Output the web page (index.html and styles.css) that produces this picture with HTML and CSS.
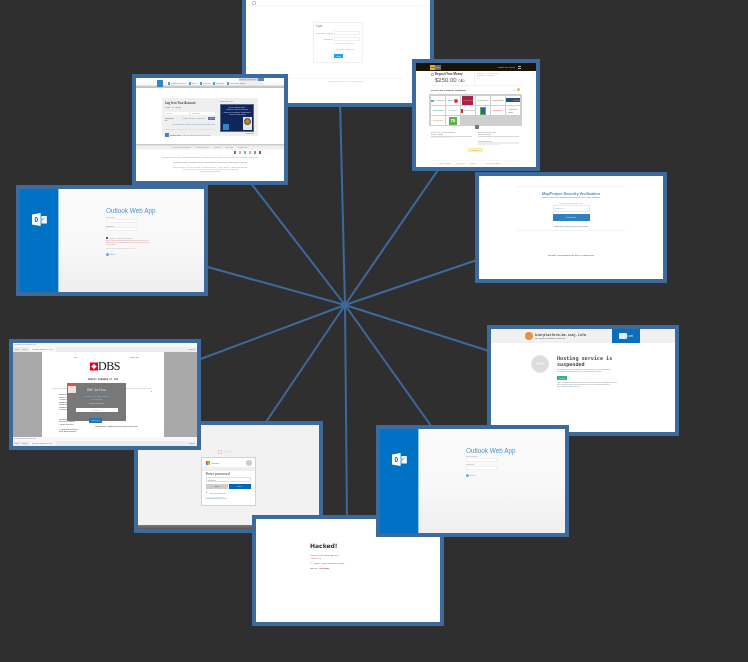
FILE: index.html
```html
<!DOCTYPE html>
<html lang="en">
<head>
<meta charset="utf-8">
<title>Phishing site clusters</title>
<link rel="stylesheet" href="styles.css">
</head>
<body>
<main class="canvas">
  <svg class="links" width="748" height="662" viewBox="0 0 748 662">
    <g class="link-lines">
      <line x1="345" y1="305" x2="340" y2="100"/>
      <line x1="345" y1="305" x2="250" y2="182"/>
      <line x1="345" y1="305" x2="440" y2="167"/>
      <line x1="345" y1="305" x2="480" y2="259"/>
      <line x1="345" y1="305" x2="204" y2="266"/>
      <line x1="345" y1="305" x2="198" y2="360"/>
      <line x1="345" y1="305" x2="492" y2="352"/>
      <line x1="345" y1="305" x2="264" y2="425"/>
      <line x1="345" y1="305" x2="434" y2="430"/>
      <line x1="345" y1="305" x2="347" y2="520"/>
    </g>
  </svg>

  <!-- top login -->
  <section class="shot s-login">
    <div class="page">
      <div class="lg-head"><span class="lg-icon"></span></div>
      <div class="lg-box">
        <div class="lg-title">Login</div>
        <div class="lg-row lg-first"><span class="lg-label">Username / Email</span><span class="lg-input"></span></div>
        <div class="lg-row"><span class="lg-label">Password</span><span class="lg-input"></span></div>
        <div class="lg-forgot">Forgot your password?</div>
        <div class="lg-keep">Keep me logged in</div>
        <div class="lg-btn">Login</div>
      </div>
      <div class="lg-foot">Copyright 2016 Webmail Server. All rights reserved</div>
    </div>
  </section>

  <!-- american express -->
  <section class="shot s-amex">
    <div class="page">
      <div class="ax-head">
        <span class="ax-logo"></span>
        <nav class="ax-nav">
          <span class="ax-nav-item"><i></i>Cards &amp; Services</span>
          <span class="ax-nav-item"><i></i>Travel</span>
          <span class="ax-nav-item"><i></i>Rewards</span>
          <span class="ax-nav-item"><i></i>Business</span>
          <span class="ax-nav-item"><i></i>Merchants</span>
        </nav>
        <div class="ax-search">
          <div class="ax-search-top"><span>Welcome, Log In Here</span><b></b></div>
          <div class="ax-search-box">Search</div>
        </div>
      </div>
      <div class="ax-card">
        <div class="ax-form">
          <div class="ax-title">Log In to Your Account</div>
          <div class="ax-select">Cards - My Account</div>
          <div class="ax-inputs"><span>User ID</span><span>Password</span></div>
          <div class="ax-actions"><span class="ax-remember">Remember<br>Me</span><span class="ax-forgot">Forgot User ID or Password?</span><b class="ax-login">Log In</b></div>
          <div class="ax-assist">Not Registered? Register for Online Services / Confirm Card</div>
          <div class="ax-reg"><i></i><b>Pay Bills Online</b> Learn more about our digital services here</div>
        </div>
        <div class="ax-promo">
          <div class="ax-promo-cap">Need Some Help?</div>
          <div class="ax-promo-img">
            <div class="ax-promo-text">Our Members Enjoy<br>Customer Service Ranked<br>Highest in Customer Satisfaction<br>Among Credit Cards</div>
            <div class="ax-promo-row"><span class="ax-promo-logo"></span><span class="ax-award"><i></i></span></div>
          </div>
          <div class="ax-promo-more">Learn more</div>
        </div>
      </div>
      <div class="ax-band">
        <span>Terms and Conditions</span><span>Security Center</span><span>Careers</span><span>Site Map</span><span>Contact Us</span>
      </div>
      <div class="ax-social"><i class="c1"></i><i class="c2"></i><i class="c3"></i><i class="c4"></i><i class="c5"></i><i class="c6"></i></div>
      <div class="ax-foot">
        <p class="ax-f1">American Express Cards | Small Business Cards | Gift Cards | Travel Cheques | Online Services | Merchant Account Travel</p>
        <p class="ax-f0">Personal Savings | Rewards Program | Special Offers | Credit Score | Send Money | Support</p>
        <p class="ax-f2">Shop Online | Travel Deals | Get Rewards | Apply Today | Small Business</p>
        <p class="ax-f3">All users of our online services are subject to our Privacy Statement and agree to the Terms of Use</p>
        <p class="ax-f3">&copy; 2015 American Express Company</p>
      </div>
    </div>
  </section>

  <!-- deposit -->
  <section class="shot s-deposit">
    <div class="page">
      <div class="dp-head">
        <span class="dp-logo"><b>GOLD</b><em>money</em></span>
        <span class="dp-nav">Contact&nbsp; Help&nbsp; Log Out</span>
        <span class="dp-menu"></span>
      </div>
      <div class="dp-top">
        <div class="dp-sum">
          <div class="dp-h"><i></i>Deposit Your Money</div>
          <div class="dp-amt">$250.00 <small>CAD</small></div>
        </div>
        <div class="dp-meta"><span>Method:<br>Online Bill</span><span>Account: 2381<br>Personal</span></div>
      </div>
      <div class="dp-sel"><span>Select Your Financial Institution</span><em>Help<i></i></em></div>
      <div class="dp-panel">
        <span class="dp-bank b-blue"><i></i>Financial</span>
        <span class="dp-bank b-bmo">BMO<i></i></span>
        <span class="dp-bank b-red">ATB Bank</span>
        <span class="dp-bank b-green">Desjardins</span>
        <span class="dp-bank b-rbc">RBC Bank</span>
        <span class="dp-bank b-scotia">Scotia</span>
        <span class="dp-bank b-coast">Coast Capital</span>
        <span class="dp-bank b-sky">Meridian</span>
        <span class="dp-bank b-cibc"><i></i>CIBC Bank</span>
        <span class="dp-bank b-rb"><i></i></span>
        <span class="dp-bank b-tang">Tangerine</span>
        <span class="dp-bank b-laur">Laurentian<br>Bank</span>
        <span class="dp-bank b-orange">Tangerine</span>
        <span class="dp-bank b-td"><i>TD</i></span>
      </div>
      <span class="dp-chip"></span>
      <div class="dp-form">
        <div class="dp-col">
          <label>Select Your Account Institution</label>
          <div class="dp-drop">Select Account</div>
          <small>Select an account to continue</small>
        </div>
        <div class="dp-col">
          <label>Select Recipient Name</label>
          <div class="dp-drop">Select Recipient</div>
          <label class="dp-l2">Recipient's Email</label>
          <div class="dp-bar"></div>
          <small>Email where to send your deposit</small>
        </div>
      </div>
      <div class="dp-btn">Deposit</div>
      <div class="dp-foot"><span>Inbox Bank</span><span>Find Us</span><span>Bank</span><span>Welcome Bank</span></div>
    </div>
  </section>

  <!-- security -->
  <section class="shot s-security">
    <div class="page">
      <div class="sc-col">
        <h2 class="sc-title">MapProject Security Verification</h2>
        <p class="sc-sub">Enter your email password to access your email settings</p>
        <p class="sc-mail">info@mapproject.org</p>
        <div class="sc-input">Password</div>
        <div class="sc-btn">Continue to</div>
        <p class="sc-link">MapProject Web Server Client Policy</p>
      </div>
      <p class="sc-copy">Copyright &copy; 2016 MapProject Web Server. All rights reserved</p>
    </div>
  </section>

  <!-- outlook with error -->
  <section class="shot s-owa1">
    <div class="owa">
      <aside class="owa-side">
        <svg class="owa-logo" viewBox="0 0 15 13"><path class="w" d="M0 1.600 8.600 0v13L0 11.400z"/><path class="w" d="M9.400 3h5.400v7.500H9.400z"/><path class="b" d="M4.300 3.900c-1 0-1.600 1-1.600 2.600s.6 2.600 1.600 2.600 1.600-1 1.600-2.600-.6-2.600-1.600-2.600zm0 1c.4 0 .6.6.6 1.600s-.2 1.600-.6 1.600-.6-.6-.6-1.600.2-1.600.6-1.600zM10 7.500l2-1.800 2-1.700-4 2.500z"/></svg>
      </aside>
      <div class="owa-main">
        <div class="owa-title">Outlook Web App</div>
        <label>User name:</label><span class="owa-input"></span>
        <label>Password:</label><span class="owa-input"></span>
        <div class="owa-check"><i></i>Security ( show explanation )</div>
        <div class="owa-err">This is a public or shared computer. Select this option if you use Outlook Web App on a public computer. Be sure to sign out when you've finished.</div>
        <div class="owa-light">Use the light version of Outlook Web App</div>
        <div class="owa-sign"><i></i>sign in</div>
      </div>
    </div>
  </section>

  <!-- pdf viewer -->
  <section class="shot s-dbs">
    <div class="pdf">
      <div class="pdf-menu">File Edit View Window Help</div>
      <div class="pdf-tools"><span>Home</span><span>Tools</span><span class="pdf-tab">SKRIPT PERKARA PT...</span><em>Sign In</em></div>
      <div class="pdf-body">
        <div class="pdf-doc">
          <div class="pdf-date"><span>TGL</span><span>Nomor Dok</span></div>
          <div class="pdf-brand"><svg class="pdf-mark" viewBox="0 0 8 8"><path d="M0 0h8v8H0z"/><path class="x" d="M4 1.100 5.200 2.800 6.900 4 5.200 5.200 4 6.900 2.800 5.200 1.100 4 2.800 2.800z"/></svg><span>DBS</span></div>
          <div class="pdf-h">SKRIPT PERKARA PT JDI</div>
          <div class="pdf-rule"><span>1</span></div>
          <div class="pdf-text">
            <p>Nomor Dokumen Perkara</p><p>Nama Perusahaan</p><p>Alamat Kantor</p><p>Tanggal Pengiriman</p><p>Nomor Rekening</p><p>Jumlah Nominal</p><p>Perihal Surat</p><p class="pdf-gap">Nasabah: 1 Kode Bank</p><p>Dokumen Lengkap</p><p>Alamat Penerima</p><p class="pdf-sum">Perkara Dua: catatan penting untuk surat resmi</p><p>(1) Nasabah's Perkara</p><p>Kode Bank Nasional</p>
          </div>
        </div>
      </div>
      <div class="pdf-menu">File Edit View Window Help</div>
      <div class="pdf-tools pdf-tools-end"><span>Home</span><span>Tools</span><span class="pdf-tab">SKRIPT PERKARA PT...</span><em>Sign In</em></div>
    </div>
    <div class="pdf-modal">
      <span class="pdf-file"></span>
      <div class="pdf-modal-title">PDF Online</div>
      <div class="pdf-modal-blue">Confirm your email address<br>to download</div>
      <div class="pdf-modal-note">Please Complete It</div>
      <div class="pdf-modal-input">Password</div>
    </div>
    <div class="pdf-modal-btn">Download</div>
  </section>

  <!-- suspended -->
  <section class="shot s-susp">
    <div class="page">
      <div class="sp-head">
        <span class="sp-face"></span>
        <div class="sp-dom"><b>kiorplatform.bo.ssoj.info</b><small>this website is hosted by SSJ.com</small></div>
        <div class="sp-brand"><i></i>.com</div>
      </div>
      <div class="sp-body">
        <div class="sp-stop"><span>STOP</span></div>
        <div class="sp-text">
          <h2>Hosting service is suspended</h2>
          <p>The website owner and the hosting provider has agreed. The ad-related platform.<br>Your hosting account provider believes you may contact the admin.</p>
          <span class="sp-btn">contact</span>
          <p>This is a phishing or abusive website that has violated hosting policy conditions of this. Our<br>service activities <u>support panel</u> and hosts of this type are required immediately to<br>have a suspended to be reviewed.</p>
        </div>
      </div>
    </div>
  </section>

  <!-- microsoft -->
  <section class="shot s-ms">
    <div class="ms">
      <div class="ms-office"><i></i>Office</div>
      <div class="ms-card">
        <div class="ms-top">
          <svg class="ms-flag" viewBox="0 0 4 4"><path fill="#f25022" d="M0 0h1.900v1.900H0z"/><path fill="#7fba00" d="M2.100 0H4v1.900H2.100z"/><path fill="#00a4ef" d="M0 2.100h1.900V4H0z"/><path fill="#ffb900" d="M2.100 2.100H4V4H2.100z"/></svg>
          <span class="ms-word">Microsoft</span>
          <span class="ms-user"></span>
        </div>
        <div class="ms-strip"></div>
        <div class="ms-form">
          <div class="ms-h">Enter password</div>
          <div class="ms-input">Password</div>
          <div class="ms-btns"><span class="ms-back">Back</span><span class="ms-next">Sign in</span></div>
          <div class="ms-keep"><i></i>Keep me signed in</div>
          <div class="ms-forgot">Forgot my password</div>
        </div>
      </div>
      <div class="ms-bottom"></div>
    </div>
  </section>

  <!-- hacked -->
  <section class="shot s-hack">
    <div class="page hk">
      <h2>Hacked!</h2>
      <p class="hk-a">Long Live the Caliphate Gov</p>
      <p class="hk-red">Hacked Us</p>
      <p class="hk-b">&#9786; Hacker : TNT Nadeula Helmed</p>
      <p class="hk-c">Our Inf.. <b>&nbsp;01711111</b></p>
      <p class="hk-d">...</p>
    </div>
  </section>

  <!-- outlook plain -->
  <section class="shot s-owa2">
    <div class="owa">
      <aside class="owa-side">
        <svg class="owa-logo" viewBox="0 0 15 13"><path class="w" d="M0 1.600 8.600 0v13L0 11.400z"/><path class="w" d="M9.400 3h5.400v7.500H9.400z"/><path class="b" d="M4.300 3.900c-1 0-1.600 1-1.600 2.600s.6 2.600 1.600 2.600 1.600-1 1.600-2.600-.6-2.600-1.600-2.600zm0 1c.4 0 .6.6.6 1.600s-.2 1.600-.6 1.600-.6-.6-.6-1.600.2-1.600.6-1.600zM10 7.500l2-1.800 2-1.700-4 2.500z"/></svg>
      </aside>
      <div class="owa-main owa-main2">
        <div class="owa-title">Outlook Web App</div>
        <label>Email address:</label><span class="owa-input"></span>
        <label>Password:</label><span class="owa-input"></span>
        <div class="owa-sign"><i></i>sign in</div>
      </div>
    </div>
  </section>
</main>
</body>
</html>
```
FILE: styles.css
```css
* { box-sizing: border-box; margin: 0; padding: 0; }
html, body { width: 748px; height: 662px; overflow: hidden; background: #2f2f2f; }
body { font-family: "Liberation Sans", Arial, sans-serif; color: #333; }
p, h2 { font-weight: normal; }
i, em { font-style: normal; }

.canvas { position: relative; width: 748px; height: 662px; overflow: hidden; }
.links { position: absolute; left: 0; top: 0; }
.link-lines line { stroke: #3d6a9c; stroke-width: 2; }

.shot { position: absolute; width: 192px; height: 111px; border: 4px solid #3d6a9c; background: #fff; overflow: hidden; }
.shot > * { filter: blur(.4px); }
.page { width: 100%; height: 100%; background: #fff; display: flex; flex-direction: column; overflow: hidden; }

.s-login { left: 242px; top: -4px; z-index: 1; }
.s-amex { left: 132px; top: 74px; width: 156px; z-index: 3; }
.s-deposit { left: 412px; top: 59px; width: 128px; height: 112px; z-index: 3; }
.s-security { left: 475px; top: 172px; z-index: 2; }
.s-owa1 { left: 16px; top: 185px; z-index: 2; }
.s-dbs { left: 9px; top: 339px; z-index: 4; }
.s-susp { left: 487px; top: 325px; z-index: 2; }
.s-ms { left: 134px; top: 421px; width: 189px; height: 112px; z-index: 3; }
.s-hack { left: 252px; top: 515px; z-index: 5; }
.s-owa2 { left: 376px; top: 425px; width: 193px; height: 112px; z-index: 6; }

/* login */
.lg-head { height: 6px; padding: 1px 0 0 6px; border-bottom: 1px solid #f6f6f6; flex: none; }
.lg-icon { display: block; width: 4px; height: 4px; border: 1px solid #b9c6cf; border-radius: 1px; }
.lg-box { width: 50px; height: 41px; margin: 16px 0 0 67px; border: 1px solid #f0f0f0; padding: 2px; color: #888; flex: none; }
.lg-title { font-size: 2.600px; line-height: 3px; color: #777; }
.lg-row { display: flex; align-items: center; justify-content: flex-end; gap: 1px; margin-top: 2px; }
.lg-first { margin-top: 3px; }
.lg-label { font-size: 2.200px; color: #999; white-space: nowrap; }
.lg-input { width: 26px; height: 4px; border: 1px solid #efefef; flex: none; }
.lg-forgot { font-size: 2px; color: #9cc; margin: 1px 0 0 18px; white-space: nowrap; line-height: 2px; }
.lg-keep { font-size: 2.200px; color: #999; margin: 4px 0 0 20px; line-height: 3px; }
.lg-btn { width: 9px; height: 4px; margin: 3px 0 0 18px; background: #18a8f0; color: #dff; font-size: 2px; line-height: 4px; text-align: center; }
.lg-foot { margin: 15px 0 0 41px; padding-top: 2px; border-top: 1px solid #f6f6f6; font-size: 1.600px; line-height: 2px; color: #bbb; text-align: center; white-space: nowrap; width: 118px; }

/* amex */
.ax-head { height: 10px; flex: none; padding-left: 21px; display: flex; align-items: flex-start; background: linear-gradient(#fff 0, #f8f8f8 65%, #bdbdbd 90%, #c9c9c9 100%); }
.ax-logo { width: 6px; height: 7px; margin-top: 2px; background: #2f86c8; flex: none; }
.ax-nav { display: flex; gap: 3px; margin: 3.500px 0 0 5px; font-size: 1.900px; white-space: nowrap; }
.ax-nav-item { display: flex; align-items: center; gap: 1px; color: #5a7f9f; }
.ax-nav-item i { width: 2px; height: 3px; background: #5e9ac4; }
.ax-search { width: 29px; margin-left: auto; margin-right: 20px; font-size: 1.800px; color: #777; white-space: nowrap; }
.ax-search-top { display: flex; height: 2.500px; background: #d6d6e0; overflow: hidden; line-height: 2.500px; justify-content: space-between; color: #878; }
.ax-search-top b { width: 6px; background: #5e86b8; }
.ax-search-box { height: 4px; background: #f0f0f0; color: #555; line-height: 4px; padding-left: 1px; }
.ax-card { width: 96px; height: 38px; margin: 10px 0 0 26px; background: #efefef; display: flex; padding: 3px 3px 0 3px; gap: 5px; flex: none; }
.ax-form { width: 50px; flex: none; font-size: 1.800px; color: #888; white-space: nowrap; }
.ax-title { font-size: 2.800px; line-height: 4px; font-weight: bold; color: #4a4a4a; }
.ax-select { line-height: 3px; margin-top: 1px; color: #666; }
.ax-inputs { display: flex; gap: 2px; margin-top: 3px; }
.ax-inputs span { flex: 1; background: #fff; height: 3px; line-height: 3px; padding-left: 1px; color: #999; }
.ax-actions { display: flex; justify-content: space-between; margin-top: 2px; line-height: 2px; align-items: flex-start; }
.ax-remember { color: #555; }
.ax-forgot { color: #7a95ae; margin-left: 6px; }
.ax-login { width: 7px; height: 3px; background: #5570aa; color: #dde; font-weight: normal; line-height: 3px; text-align: center; }
.ax-assist { color: #6f93b8; text-align: right; margin-top: 2px; line-height: 3px; font-size: 1.600px; overflow: hidden; }
.ax-reg { margin-top: 3px; padding-top: 3px; border-top: 1px solid #e2e2e2; display: flex; align-items: center; gap: 1px; font-size: 1.500px; color: #888; overflow: hidden; }
.ax-reg i { width: 4px; height: 4px; background: #4d84b5; flex: none; }
.ax-reg b { color: #4b6a99; }
.ax-promo { width: 34px; flex: none; font-size: 1.600px; color: #777; white-space: nowrap; }
.ax-promo-cap { height: 3px; line-height: 2px; }
.ax-promo-img { height: 28px; background: #10255c; border: 1px solid #5a6a8a; padding: 1px 1px 0; color: #c5d2e8; display: flex; flex-direction: column; }
.ax-promo-text { text-align: center; line-height: 2.300px; font-size: 1.900px; }
.ax-promo-row { display: flex; justify-content: space-between; align-items: flex-end; margin-top: auto; padding: 0 0 1px 1px; }
.ax-promo-logo { width: 6px; height: 6px; background: #2f86c8; }
.ax-award { width: 9px; height: 13px; background: #e6e6e6; display: flex; justify-content: center; padding-top: 1px; }
.ax-award i { width: 7px; height: 7px; border-radius: 50%; background: #b3893e; border: 1px solid #4b3a17; }
.ax-promo-more { text-align: right; line-height: 3px; color: #6a6a6a; }
.ax-band { height: 6px; margin-top: 8px; flex: none; display: flex; justify-content: center; gap: 5px; align-items: center; font-size: 1.900px; color: #6ea5cc; white-space: nowrap; background: linear-gradient(#bdbdbd, #e9e9e9 30%, #f6f6f6); }
.ax-social { display: flex; justify-content: flex-end; gap: 2.500px; height: 3px; margin-top: 1px; padding-right: 23px; flex: none; }
.ax-social i { width: 2.500px; height: 2.500px; }
.c1 { background: #5c72a8; } .c2 { background: #e8a7a0; } .c3 { background: #60b8e8; } .c4 { background: #dba4a0; } .c5 { background: #5fa0cf; } .c6 { background: #c84040; }
.ax-foot { text-align: center; padding: 1px 24px 0 24px; color: #777; }
.ax-foot p { line-height: 2.600px; }
.ax-f1 { color: #8aa3bb; font-size: 1.800px; margin-top: 1px; }
.ax-f0 { color: #888; font-size: 1.800px; margin-top: 2px; }
.ax-f2 { color: #7fb1d8; font-size: 2.300px; margin-top: 3px; }
.ax-f3 { color: #999; font-size: 1.300px; line-height: 2.400px !important; }

/* deposit */
.dp-head { height: 8px; background: #1a1303; display: flex; align-items: center; padding-left: 14px; flex: none; }
.dp-logo { display: flex; height: 5px; font-size: 1.800px; line-height: 5px; }
.dp-logo b { background: #e8ad1a; width: 5px; color: #2a1a00; overflow: hidden; }
.dp-logo em { background: #6b6b6b; width: 6px; color: #ddd; overflow: hidden; }
.dp-nav { margin-left: auto; margin-right: 3px; color: #d2d2d2; font-size: 1.700px; white-space: nowrap; }
.dp-menu { width: 3px; height: 3px; border-top: 1px solid #bbb; border-bottom: 1px solid #bbb; margin-right: 15px; }
.dp-top { display: flex; height: 15px; margin: 0 14px 0 15px; border-bottom: 1px solid #f2f2f2; flex: none; }
.dp-sum { width: 44px; border-right: 1px solid #f0f0f0; flex: none; padding-top: 1px; }
.dp-h { display: flex; align-items: center; gap: 1px; font-size: 2.900px; font-weight: bold; color: #333; white-space: nowrap; line-height: 4px; }
.dp-h i { width: 3px; height: 3px; border: 1px solid #bbb; }
.dp-amt { font-size: 6px; line-height: 7px; margin: 1px 0 0 4px; color: #555; white-space: nowrap; }
.dp-amt small { font-size: 3px; }
.dp-meta { display: flex; gap: 3px; margin: 1px 0 0 2px; font-size: 1.700px; color: #aaa; line-height: 2px; white-space: nowrap; }
.dp-sel { margin: 1px 16px 0 15px; height: 5px; display: flex; align-items: center; justify-content: space-between; font-size: 2.300px; font-weight: bold; color: #3a3a3a; white-space: nowrap; flex: none; }
.dp-sel em { display: flex; align-items: center; gap: 1px; color: #aaa; font-size: 1.800px; font-weight: normal; }
.dp-sel em i { width: 3.500px; height: 3.500px; border-radius: 50%; background: #eeb53a; }
.dp-panel { width: 93px; height: 32px; margin: 2px 0 0 13px; padding: 2px; background: #cfcfcf; display: grid; grid-template-columns: repeat(6, 14px); grid-auto-rows: 9px; gap: 1px; flex: none; }
.dp-bank { background: #fff; font-size: 2.300px; display: flex; align-items: center; justify-content: center; gap: 1px; white-space: nowrap; overflow: hidden; line-height: 1.500; }
.b-blue { color: #777; } .b-blue i { width: 3px; height: 2px; background: #55a4dd; }
.b-bmo { color: #3a7fc0; } .b-bmo i { width: 4px; height: 4px; border-radius: 50%; background: #d9343a; }
.b-red { background: linear-gradient(90deg,#fff 1px,#a91f4e 1px,#a91f4e 12px,#fff 12px); color: #e0a050; }
.b-green { color: #4a9b83; }
.b-rbc { color: #8a6a6a; }
.b-scotia { background: linear-gradient(#fff 2px,#22518c 2px,#22518c 6px,#fff 6px); color: #f0bc24; justify-content: flex-end; }
.b-coast { color: #3f8f6f; font-size: 1.800px; }
.b-sky { color: #8fb5d4; }
.b-cibc { color: #999; } .b-cibc i { width: 3px; height: 4px; background: #d3242e; }
.b-rb i { width: 6px; height: 8px; background: #1d6aa8; border: 1px solid #6aa84f; }
.b-tang { color: #e0525a; }
.b-laur { color: #666; font-size: 1.800px; line-height: 2.200px; text-align: left; }
.b-orange { color: #ee8a2d; }
.b-td i { width: 8px; height: 8px; background: #60b14a; color: #fff; font-size: 3.500px; line-height: 8px; text-align: center; font-weight: bold; }
.dp-chip { width: 4px; height: 4px; background: #777; margin: -1px 0 0 59px; flex: none; }
.dp-form { display: flex; margin: 2px 0 0 15px; gap: 6px; font-size: 1.800px; color: #888; white-space: nowrap; flex: none; height: 16px; }
.dp-col { width: 41px; }
.dp-col label { display: block; line-height: 2px; }
.dp-drop { line-height: 2.500px; border-bottom: 1px solid #d8d8d8; color: #777; }
.dp-col small { display: block; font-size: 1.500px; line-height: 2px; color: #ccc; }
.dp-l2 { margin-top: 3px; }
.dp-bar { height: 2px; background: #e9efe9; }
.dp-btn { width: 15px; height: 4px; margin: 1px 0 0 52px; background: #fcedae; font-size: 1.800px; line-height: 4px; text-align: center; color: #c9b35a; flex: none; }
.dp-foot { display: flex; margin: 8px 15px 0 15px; padding: 1px 0 0 8px; border-top: 1px solid #f6f6f6; height: 5px; gap: 6px; font-size: 2.300px; color: #aaa; white-space: nowrap; border-bottom: 1px solid #f6f6f6; flex: none; }
.dp-foot span:last-child { margin-left: 4px; }

/* security */
.s-security .page { align-items: center; }
.sc-col { width: 108px; margin-top: 10px; height: 45px; border-top: 1px solid #f2f2f2; border-bottom: 1px solid #f2f2f2; display: flex; flex-direction: column; align-items: center; flex: none; }
.sc-title { font-size: 3.800px; line-height: 4px; margin-top: 5px; color: #4f88c2; font-weight: bold; white-space: nowrap; }
.sc-sub { font-size: 2.300px; line-height: 3px; color: #5073a8; white-space: nowrap; }
.sc-mail { font-size: 2.500px; line-height: 3px; color: #8fb4dc; margin-top: 3px; white-space: nowrap; }
.sc-input { width: 37px; height: 7px; border: 1px solid #e8e8e8; font-size: 2px; line-height: 5px; padding-left: 1px; color: #aaa; }
.sc-btn { width: 37px; height: 7px; margin-top: 2px; background: #327fc0; color: #cfe4f6; font-size: 2px; line-height: 7px; text-align: center; }
.sc-link { font-size: 2.100px; line-height: 3px; color: #4a6f9f; margin-top: 4px; white-space: nowrap; }
.sc-copy { font-size: 1.700px; line-height: 3px; color: #444; margin-top: 23px; white-space: nowrap; }

/* outlook */
.owa { width: 100%; height: 100%; display: flex; }
.owa-side { width: 39px; flex: none; background: #0072c6; border-right: 1px solid #8fc4ea; padding: 24px 0 0 12px; }
.owa-logo { display: block; width: 15px; height: 13px; }
.owa-logo .w { fill: #fff; }
.owa-logo .b { fill: #0072c6; }
.owa-main { flex: 1; background: linear-gradient(#fbfbfb, #f8f8f8 55%, #eeeeee); padding: 18px 0 0 47px; display: flex; flex-direction: column; align-items: flex-start; font-size: 1.800px; color: #888; }
.owa-title { font-size: 6.400px; line-height: 8px; color: #4a8fd0; white-space: nowrap; }
.owa-main label { line-height: 2.500px; margin-top: 1px; color: #999; }
.owa-input { display: block; width: 31px; height: 4px; background: #fff; border: 1px solid #f0f0f0; }
.owa-main label + .owa-input + label { margin-top: 2px; }
.owa-check { display: flex; align-items: center; gap: 2px; margin-top: 6px; line-height: 2px; white-space: nowrap; color: #999; }
.owa-check i { width: 1.500px; height: 1.500px; background: #555; }
.owa-err { width: 47px; font-size: 1.500px; line-height: 2.100px; color: #d18a8a; margin-top: .5px; }
.owa-light { margin-top: 2px; line-height: 2.500px; font-size: 1.600px; color: #bbb; white-space: nowrap; }
.owa-sign { display: flex; align-items: center; gap: 1px; margin-top: 3px; line-height: 3px; color: #4a8fd0; font-size: 2px; }
.owa-sign i { width: 3px; height: 3px; background: #6aa6dc; border-radius: 50%; }
.owa-main2 label { line-height: 3px; margin-top: 0; }
.owa-main2 label + .owa-input + label { margin-top: 1px; }
.owa-main2 .owa-sign { margin-top: 4px; }

/* pdf */
.pdf { width: 100%; height: 100%; display: flex; flex-direction: column; background: #fff; }
.pdf-menu { height: 4px; flex: none; background: #f8f8f8; font-size: 1.800px; line-height: 3.500px; padding-left: 1px; color: #777; white-space: nowrap; }
.pdf-tools { height: 5px; flex: none; background: #ededed; display: flex; gap: 3px; font-size: 2px; line-height: 5px; padding: 0 2px 0 1px; color: #777; white-space: nowrap; }
.pdf-tab { background: #f8f8f8; padding: 0 2px; }
.pdf-tools em { margin-left: auto; }
.pdf-body { flex: 1; min-height: 0; display: flex; background: #a9a9a9; padding-left: 29px; }
.pdf-doc { width: 122px; background: #fff; height: 100%; padding: 4px 0 0 17px; overflow: hidden; }
.pdf-date { display: flex; justify-content: space-between; font-size: 1.800px; line-height: 2px; color: #666; padding: 0 7px 0 15px; width: 87px; }
.pdf-brand { display: flex; align-items: center; margin: 3px 0 0 31px; font-family: "Liberation Serif", serif; font-size: 12px; line-height: 11px; color: #111; letter-spacing: -.5px; }
.pdf-mark { width: 8px; height: 9px; display: block; }
.pdf-mark path { fill: #e2001b; }
.pdf-mark .x { fill: #fff; }
.pdf-h { margin: 6px 0 0 29px; font-size: 2.400px; line-height: 4px; font-weight: bold; font-family: "DejaVu Sans Mono", monospace; color: #333; white-space: nowrap; }
.pdf-rule { margin: 6px 12px 0 -7px; height: 5px; border-top: 1px solid #ddd; font-size: 2px; line-height: 4px; color: #444; text-align: right; }
.pdf-text { margin-top: 0; font-size: 1.900px; line-height: 2.500px; color: #444; white-space: nowrap; }
.pdf-gap { margin-top: 7px; }
.pdf-sum { font-weight: bold; margin-left: 36px; color: #666; }
.pdf-modal { position: absolute; left: 54px; top: 40px; width: 59px; height: 38px; background: #787878; display: flex; flex-direction: column; align-items: center; color: #eee; }
.pdf-file { position: absolute; left: 1px; top: 0; width: 8px; height: 10px; background: linear-gradient(#d9534f 30%, #f3dede 30%); }
.pdf-modal-title { font-size: 3.200px; line-height: 4px; margin-top: 5px; font-family: "DejaVu Sans Mono", monospace; }
.pdf-modal-blue { font-size: 2px; line-height: 2.500px; text-align: center; color: #8db6e0; margin-top: 3px; }
.pdf-modal-note { font-size: 1.800px; line-height: 3px; margin-top: 2px; color: #ddd; }
.pdf-modal-input { width: 42px; height: 4px; margin-top: 3px; background: #fff; font-size: 1.800px; line-height: 4px; text-align: center; color: #bbb; }
.pdf-modal-btn { position: absolute; left: 76px; top: 75px; width: 13px; height: 5px; background: #2475c4; color: #bcd; font-size: 1.800px; line-height: 5px; text-align: center; }

/* suspended */
.sp-head { height: 14px; flex: none; background: #f1f1f1; display: flex; align-items: center; padding-left: 34px; }
.sp-face { width: 8px; height: 8px; border-radius: 50%; background: #e9923f; flex: none; }
.sp-dom { margin-left: 2px; display: flex; flex-direction: column; white-space: nowrap; width: 77px; }
.sp-dom b { font-family: "DejaVu Sans Mono", monospace; font-size: 3.400px; line-height: 4px; color: #444; }
.sp-dom small { font-size: 2px; line-height: 2.500px; color: #555; }
.sp-brand { width: 28px; height: 14px; background: #0a6ebd; color: #dcecf8; font-size: 3px; display: flex; align-items: center; justify-content: center; flex: none; }
.sp-brand i { width: 8px; height: 6px; background: #dcecf8; border-radius: 1px; }
.sp-body { display: flex; padding: 12px 0 0 40px; gap: 8px; }
.sp-stop { width: 18px; height: 18px; border-radius: 50%; border: 1px solid #e4e4e4; background: #dcdcdc; font-size: 3.200px; font-weight: bold; color: #f3f3f3; display: flex; align-items: center; justify-content: center; flex: none; }
.sp-text { width: 76px; }
.sp-text h2 { font-size: 5.100px; line-height: 6px; font-weight: bold; font-family: "DejaVu Sans Mono", monospace; color: #444; }
.sp-text p { font-size: 1.500px; line-height: 2.100px; color: #888; white-space: nowrap; margin-top: 2px; }
.sp-text u { color: #5aa0d8; text-decoration: none; }
.sp-btn { display: block; width: 10px; height: 4px; margin: 3px 0 1px; background: #2eb67a; color: #d8f3e6; font-size: 1.800px; line-height: 4px; text-align: center; }

/* microsoft */
.ms { width: 100%; height: 100%; background: #f2f2f2; display: flex; flex-direction: column; align-items: center; position: relative; }
.ms-office { position: absolute; left: 80px; top: 24px; display: flex; align-items: center; gap: 1px; font-size: 4px; color: #f4d9cf; }
.ms-office i { width: 4px; height: 4px; border: 1px solid #f4d0c5; }
.ms-card { width: 55px; height: 49px; margin: 32px 0 0 0; background: #fff; border: 1px solid #d2d2d2; flex: none; }
.ms-top { height: 9px; display: flex; align-items: center; padding: 0 2px 0 4px; gap: 1px; }
.ms-flag { width: 4px; height: 4px; }
.ms-word { font-size: 2.100px; color: #666; }
.ms-user { width: 6px; height: 6px; margin-left: auto; border-radius: 50%; background: #ccc; margin-right: 1px; }
.ms-strip { height: 4px; background: #eeeeee; }
.ms-form { padding: 1px 4px 0 4px; }
.ms-h { font-size: 3.400px; line-height: 5px; color: #444; white-space: nowrap; }
.ms-input { height: 5px; border: 1px solid #ddd; font-size: 1.800px; line-height: 4px; padding-left: 1px; color: #888; white-space: nowrap; }
.ms-btns { display: flex; gap: 1px; margin-top: 2px; }
.ms-btns span { flex: 1; height: 5px; font-size: 1.900px; line-height: 5px; text-align: center; }
.ms-back { background: #cccccc; color: #555; }
.ms-next { background: #0067b8; color: #bcd8ee; }
.ms-keep { display: flex; align-items: center; gap: 3px; margin-top: 2px; height: 3px; font-size: 1.900px; color: #777; white-space: nowrap; }
.ms-keep i { width: 1px; height: 1px; background: #888; }
.ms-forgot { margin-top: 2px; height: 3px; font-size: 1.900px; line-height: 3px; color: #8cc0e8; background: linear-gradient(transparent 60%, #bddcf2 60%); width: 21px; white-space: nowrap; overflow: hidden; }
.ms-bottom { margin-top: auto; width: 100%; height: 4px; background: linear-gradient(#7a7a7a, #5a5a5a); flex: none; }

/* hacked */
.hk { padding: 23px 0 0 54px; color: #555; font-size: 2.300px; white-space: nowrap; }
.hk h2 { font-size: 6px; line-height: 8px; font-weight: bold; color: #333; font-family: "DejaVu Sans", sans-serif; }
.hk-a { margin-top: 4px; line-height: 3px; color: #666; }
.hk-red { line-height: 3px; color: #c47070; }
.hk-b { margin-top: 2px; line-height: 3px; color: #666; }
.hk-c { margin-top: 2px; line-height: 3px; color: #555; }
.hk-c b { color: #a83a3a; }
.hk-d { margin-top: 2px; line-height: 3px; color: #aaa; }
```
